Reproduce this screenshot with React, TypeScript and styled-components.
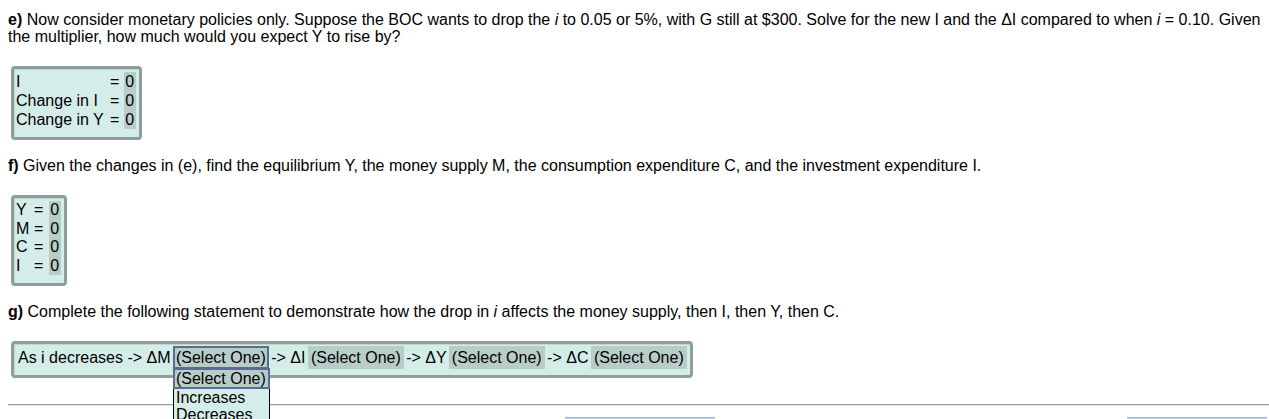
import React from 'react';
import styled, { createGlobalStyle } from 'styled-components';

const GlobalStyle = createGlobalStyle`
    body {
        margin: 8px 0 0 8px;
        background: #fff;
        font-family: "Liberation Sans", Arial, Helvetica, sans-serif;
        font-size: 16px;
        color: #000;
        overflow: hidden;
    }
`;

const Page = styled.div`
    display: flex;
    flex-direction: column;
    padding-top: 3px;
`;

const Question = styled.p`
    margin: 0;
    line-height: 17px;

    b {
        font-weight: bold;
    }
`;

const AnswerBox = styled.div<{ $inline?: boolean }>`
    align-self: flex-start;
    margin: 21px 0 17px 3px;
    background: #d5ede8;
    border: 3px solid #8e9e9a;
    border-radius: 4px;
    box-shadow: inset 1px 1px 0 #c3d3cf;
    padding: ${(p) => (p.$inline ? '4px 5px 8px 4px' : '3px 3px 8px 2px')};
`;

const Table = styled.table<{ $row: number }>`
    border-collapse: collapse;

    td {
        padding: 0;
        line-height: ${(p) => p.$row}px;
        vertical-align: middle;
        white-space: nowrap;
    }
`;

const Label = styled.td<{ $w: number }>`
    width: ${(p) => p.$w}px;
`;

const Eq = styled.td<{ $gap: number }>`
    padding: 0 ${(p) => p.$gap}px 0 1px !important;
`;

const Value = styled.td`
    background: #b9cdc8;
    padding: 0 2px 0 1px !important;
`;

const Statement = styled.div`
    line-height: 19px;
    white-space: nowrap;
`;

const SelectWrap = styled.span`
    position: relative;
    display: inline-block;
`;

const Select = styled.span<{ $focused?: boolean }>`
    display: inline-block;
    background: #b9cdc8;
    padding: 0 1px;
    box-sizing: border-box;
    border: 2px solid ${(p) => (p.$focused ? '#5c6b8f' : 'transparent')};
    margin: -2px -2px;
`;

const Options = styled.div`
    position: absolute;
    top: 20px;
    left: -2px;
    width: 95px;
    background: #d5ede8;
    border-left: 1px solid #000;
    border-right: 1px solid #000;
    z-index: 2;
`;

const Option = styled.div<{ $active?: boolean }>`
    line-height: 17px;
    padding: 0 1px;
    background: ${(p) => (p.$active ? '#b9cdc8' : 'transparent')};
    border: 2px solid ${(p) => (p.$active ? '#5c6b8f' : 'transparent')};
    border-top-width: ${(p) => (p.$active ? '2px' : '0')};
    border-bottom-width: ${(p) => (p.$active ? '2px' : '0')};
    margin: ${(p) => (p.$active ? '0 -1px 0' : '0 0 0 -1px')};
`;

const Rule = styled.hr`
    margin: 9px 0 0 0;
    border: 0;
    border-top: 1px solid #9a9a9a;
    border-bottom: 1px solid #e4e4e4;
    width: 100%;
`;

const ButtonRow = styled.div`
    display: flex;
    margin-top: 11px;
    padding-left: 557px;
`;

const NavButton = styled.div<{ $w: number; $push?: boolean }>`
    width: ${(p) => p.$w}px;
    height: 20px;
    background: #c9d9ea;
    border-top: 1px solid #9fb4cc;
    margin-left: ${(p) => (p.$push ? 'auto' : '0')};
    margin-right: ${(p) => (p.$push ? '2px' : '0')};
`;

const App: React.FC = () => {
    return (
        <Page>
            <GlobalStyle />
            <Question>
                <b>e)</b> Now consider monetary policies only. Suppose the BOC wants to drop the <i>i</i> to 0.05 or 5%, with G still at $300. Solve for the new I and the ΔI compared to when <i>i</i> = 0.10. Given the multiplier, how much would you expect Y to rise by?
            </Question>
            <AnswerBox>
                <Table $row={19}>
                    <tbody>
                        <tr><Label $w={93}>I</Label><Eq $gap={5}>=</Eq><Value>0</Value></tr>
                        <tr><Label $w={93}>Change in I</Label><Eq $gap={5}>=</Eq><Value>0</Value></tr>
                        <tr><Label $w={93}>Change in Y</Label><Eq $gap={5}>=</Eq><Value>0</Value></tr>
                    </tbody>
                </Table>
            </AnswerBox>
            <Question>
                <b>f)</b> Given the changes in (e), find the equilibrium Y, the money supply M, the consumption expenditure C, and the investment expenditure I.
            </Question>
            <AnswerBox>
                <Table $row={18.5}>
                    <tbody>
                        <tr><Label $w={17}>Y</Label><Eq $gap={6}>=</Eq><Value>0</Value></tr>
                        <tr><Label $w={17}>M</Label><Eq $gap={6}>=</Eq><Value>0</Value></tr>
                        <tr><Label $w={17}>C</Label><Eq $gap={6}>=</Eq><Value>0</Value></tr>
                        <tr><Label $w={17}>I</Label><Eq $gap={6}>=</Eq><Value>0</Value></tr>
                    </tbody>
                </Table>
            </AnswerBox>
            <Question>
                <b>g)</b> Complete the following statement to demonstrate how the drop in <i>i</i> affects the money supply, then I, then Y, then C.
            </Question>
            <AnswerBox $inline>
                <Statement>
                    As i decreases -&gt; ΔM{' '}
                    <SelectWrap>
                        <Select $focused>(Select One)</Select>
                        <Options>
                            <Option $active>(Select One)</Option>
                            <Option>Increases</Option>
                            <Option>Decreases</Option>
                        </Options>
                    </SelectWrap>
                    {' '}-&gt; ΔI <Select>(Select One)</Select> -&gt; ΔY <Select>(Select One)</Select> -&gt; ΔC <Select>(Select One)</Select>
                </Statement>
            </AnswerBox>
            <Rule />
            <ButtonRow>
                <NavButton $w={150} />
                <NavButton $w={140} $push />
            </ButtonRow>
        </Page>
    );
};

export default App;
